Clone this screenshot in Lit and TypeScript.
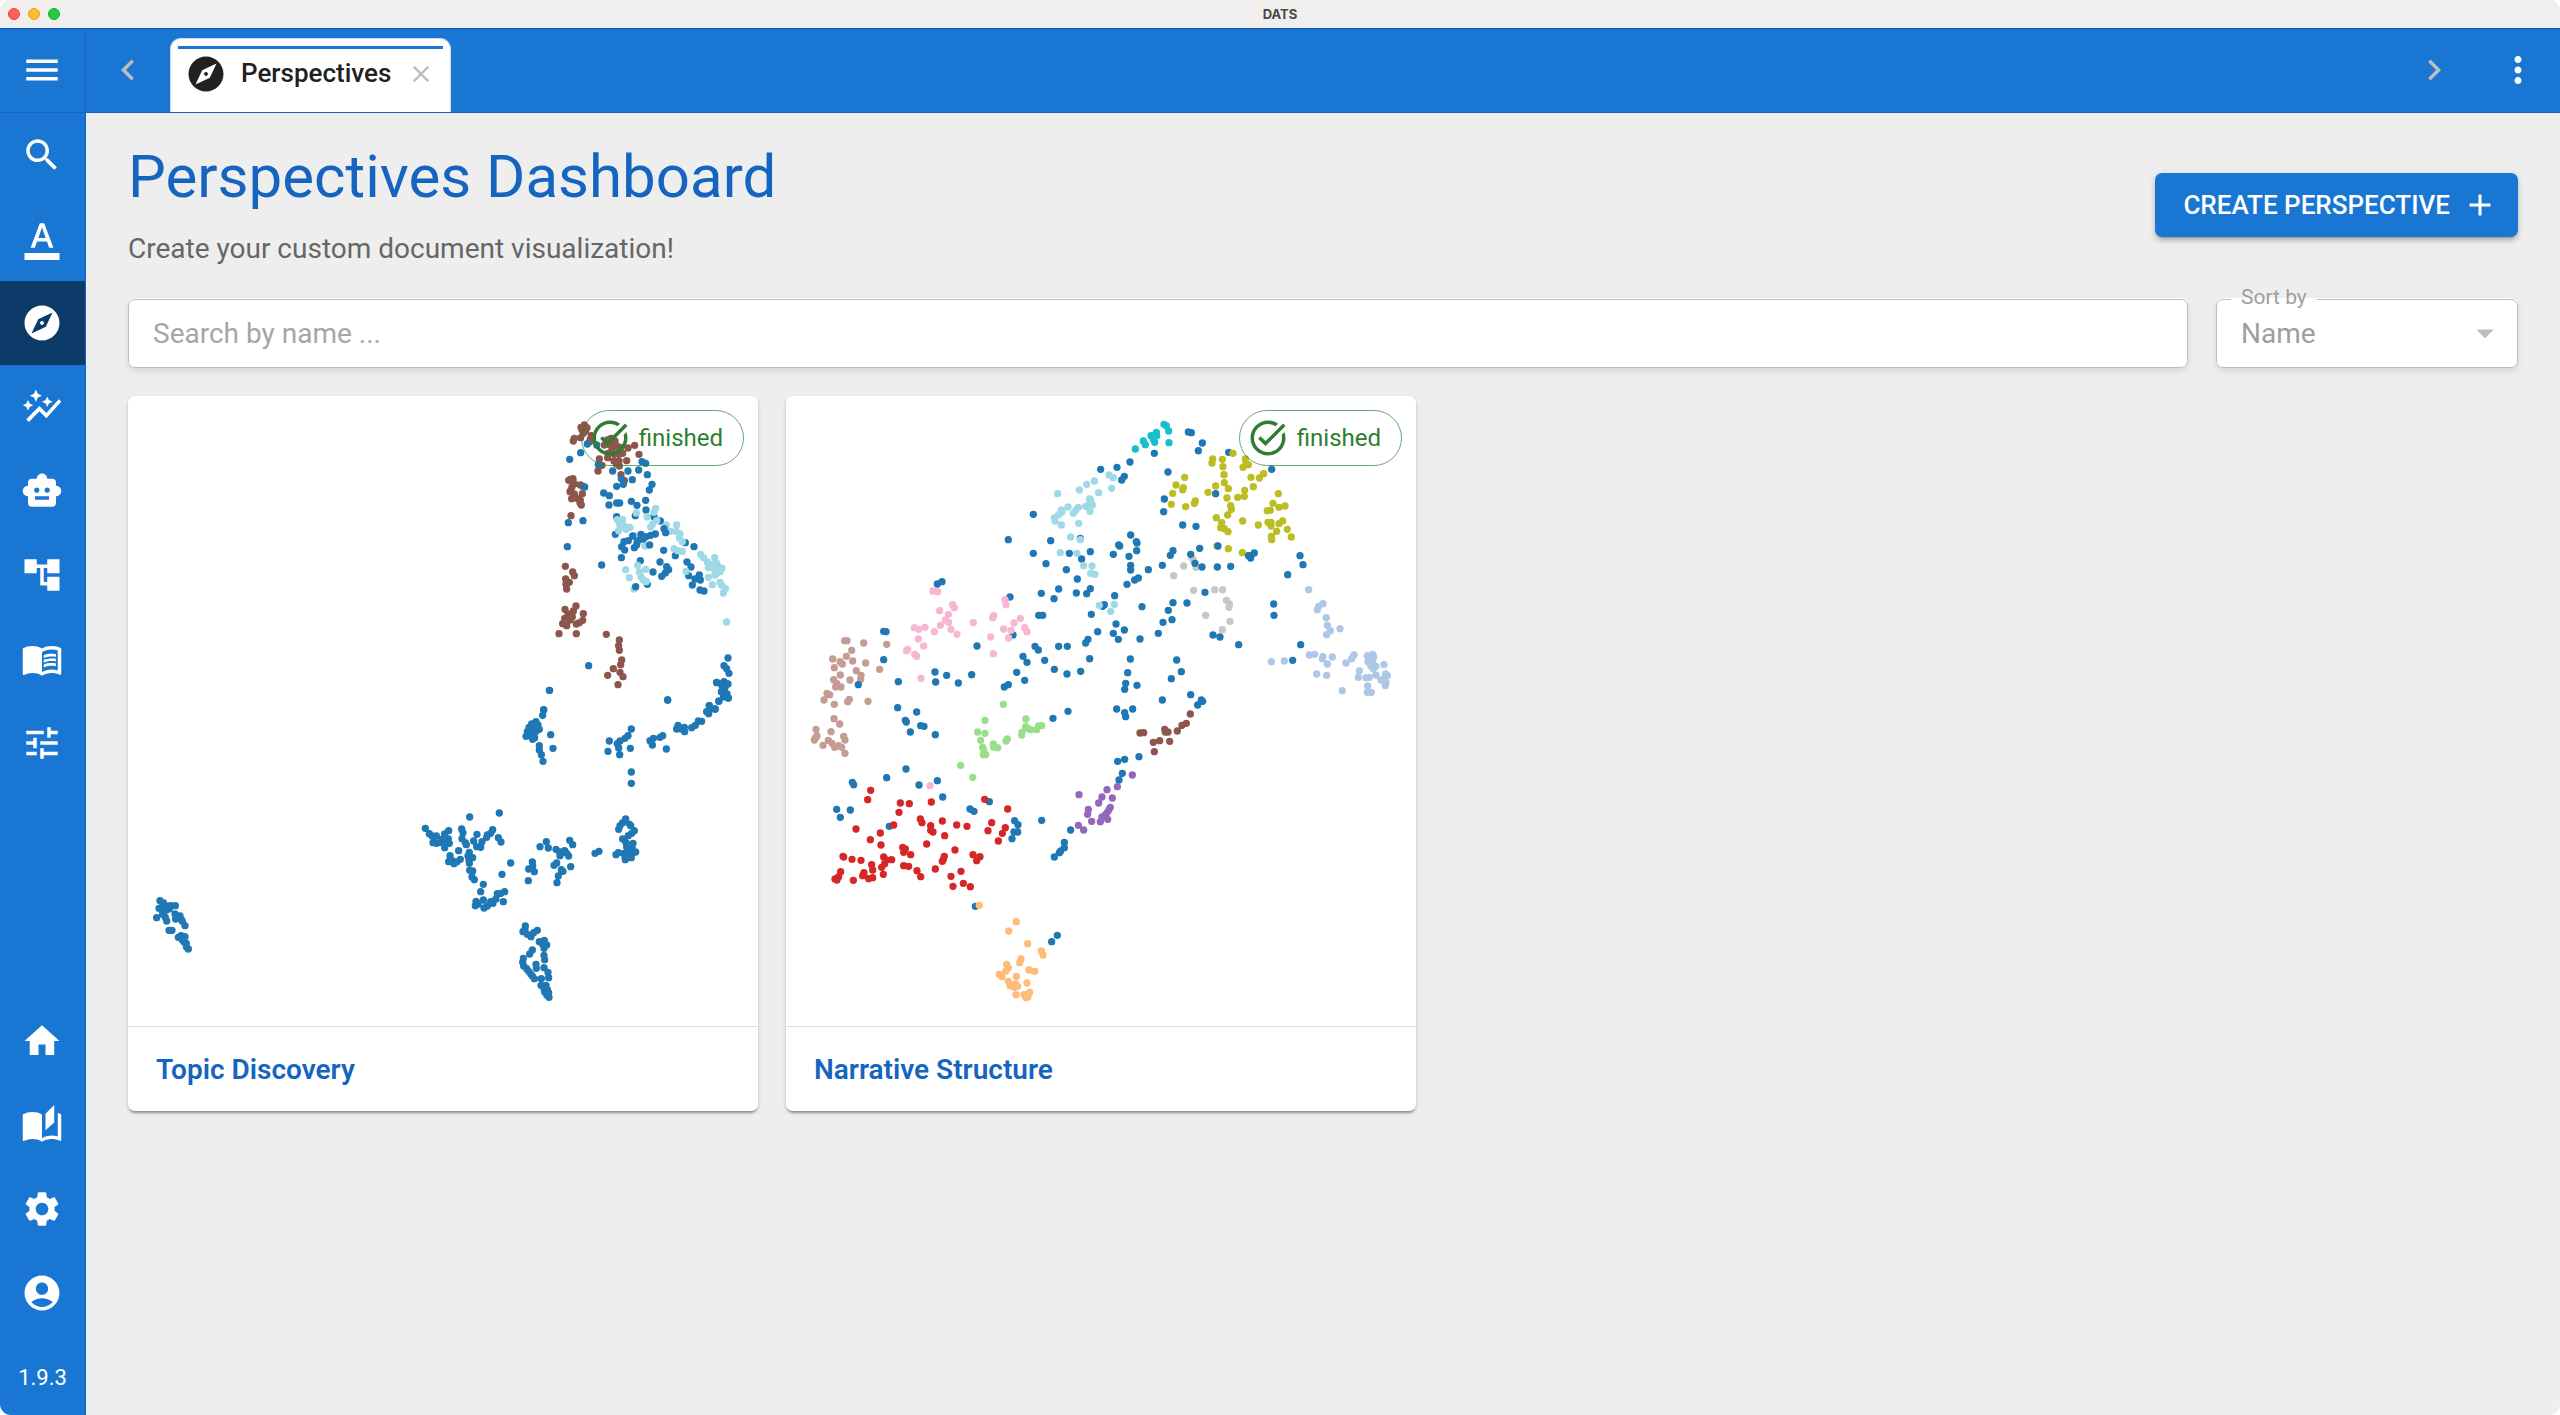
import { LitElement, html, css, svg } from "lit";
import { customElement, property, state } from "lit/decorators.js";
import { classMap } from "lit/directives/class-map.js";

const ICONS: Record<string, string> = {
  menu: "M3 18h18v-2H3v2zm0-5h18v-2H3v2zm0-7v2h18V6H3z",
  search:
    "M15.5 14h-.79l-.28-.27C15.41 12.59 16 11.11 16 9.5 16 5.91 13.09 3 9.5 3S3 5.91 3 9.5 5.91 16 9.5 16c1.61 0 3.09-.59 4.23-1.57l.27.28v.79l5 4.99L20.49 19l-4.99-5zm-6 0C7.01 14 5 11.99 5 9.5S7.01 5 9.5 5 14 7.01 14 9.5 11.99 14 9.5 14z",
  annotate:
    "M2 20h20v4H2v-4zm3.49-3h2.42l1.27-3.58h5.65L16.09 17h2.42L13.25 3h-2.5L5.49 17zm4.42-5.61 2.03-5.79h.12l2.03 5.79H9.91z",
  explore:
    "M12 10.9c-.61 0-1.1.49-1.1 1.1s.49 1.1 1.1 1.1c.61 0 1.1-.49 1.1-1.1s-.49-1.1-1.1-1.1zM12 2C6.48 2 2 6.48 2 12s4.48 10 10 10 10-4.48 10-10S17.52 2 12 2zm2.19 12.19L6 18l3.81-8.19L18 6l-3.81 8.19z",
  graph:
    "M14.06 9.94 12 9l2.06-.94L15 6l.94 2.06L18 9l-2.06.94L15 12l-.94-2.06zM4 14l.94-2.06L7 11l-2.06-.94L4 8l-.94 2.06L1 11l2.06.94L4 14zm4.5-5 1.09-2.41L12 5.5 9.59 4.41 8.5 2 7.41 4.41 5 5.5l2.41 1.09L8.5 9zm-4 11.5 6-6.01 4 4L23 8.93l-1.41-1.41-7.09 7.97-4-4L3 19l1.5 1.5z",
  robot:
    "M20 9V7c0-1.1-.9-2-2-2h-3c0-1.66-1.34-3-3-3S9 3.34 9 5H6c-1.1 0-2 .9-2 2v2c-1.66 0-3 1.34-3 3s1.34 3 3 3v4c0 1.1.9 2 2 2h12c1.1 0 2-.9 2-2v-4c1.66 0 3-1.34 3-3s-1.34-3-3-3zM7.5 11.5c0-.83.67-1.5 1.5-1.5s1.5.67 1.5 1.5S9.83 13 9 13s-1.5-.67-1.5-1.5zM16 17H8v-2h8v2zm-1-4c-.83 0-1.5-.67-1.5-1.5S14.17 10 15 10s1.5.67 1.5 1.5S15.83 13 15 13z",
  tree: "M22 11V3h-7v3H9V3H2v8h7V8h2v10h4v3h7v-8h-7v3h-2V8h2v3z",
  book: "M21 5c-1.11-.35-2.33-.5-3.5-.5-1.95 0-4.05.4-5.5 1.5-1.45-1.1-3.55-1.5-5.5-1.5S2.45 4.9 1 6v14.65c0 .25.25.5.5.5.1 0 .15-.05.25-.05C3.1 20.45 5.05 20 6.5 20c1.95 0 4.05.4 5.5 1.5 1.35-.85 3.8-1.5 5.5-1.5 1.65 0 3.35.3 4.75 1.05.1.05.15.05.25.05.25 0 .5-.25.5-.5V6c-.6-.45-1.25-.75-2-1zm0 13.5c-1.1-.35-2.3-.5-3.5-.5-1.7 0-4.15.65-5.5 1.5V8c1.35-.85 3.8-1.5 5.5-1.5 1.2 0 2.4.15 3.5.5v11.5zM17.5 10.5c.88 0 1.73.09 2.5.26V9.24c-.79-.15-1.64-.24-2.5-.24-1.7 0-3.24.29-4.5.83v1.66c1.13-.64 2.7-.99 4.5-.99zM13 12.49v1.66c1.13-.64 2.7-.99 4.5-.99.88 0 1.73.09 2.5.26V11.9c-.79-.15-1.64-.24-2.5-.24-1.7 0-3.24.3-4.5.83zM17.5 14.33c-1.7 0-3.24.29-4.5.83v1.66c1.13-.64 2.7-.99 4.5-.99.88 0 1.73.09 2.5.26v-1.52c-.79-.16-1.64-.24-2.5-.24z",
  tune: "M3 17v2h6v-2H3zM3 5v2h10V5H3zm10 16v-2h8v-2h-8v-2h-2v6h2zM7 9v2H3v2h4v2h2V9H7zm14 4v-2H11v2h10zm-6-4h2V7h4V5h-4V3h-2v6z",
  home: "M10 20v-6h4v6h5v-8h3L12 3 2 12h3v8z",
  stories:
    "M19 .5l-5 5V15l5-4.5V.5zM1 6v14.65c0 .25.25.5.5.5.1 0 .15-.05.25-.05C3.1 20.45 5.05 20 6.5 20c1.95 0 4.05.4 5.5 1.5V6c-1.45-1.1-3.55-1.5-5.5-1.5S2.45 4.9 1 6zm22 13.5V6c-.6-.45-1.25-.75-2-1v13.5c-1.1-.35-2.3-.5-3.5-.5-1.7 0-4.15.65-5.5 1.5v2c1.35-.85 3.8-1.5 5.5-1.5 1.65 0 3.35.3 4.75 1.05.1.05.15.05.25.05.25 0 .5-.25.5-.5v-1.1z",
  settings:
    "M19.14 12.94c.04-.3.06-.61.06-.94 0-.32-.02-.64-.07-.94l2.03-1.58c.18-.14.23-.41.12-.61l-1.92-3.32c-.12-.22-.37-.29-.59-.22l-2.39.96c-.5-.38-1.03-.7-1.62-.94l-.36-2.54c-.04-.24-.24-.41-.48-.41h-3.84c-.24 0-.43.17-.47.41l-.36 2.54c-.59.24-1.13.57-1.62.94l-2.39-.96c-.22-.08-.47 0-.59.22L2.74 8.87c-.12.21-.08.47.12.61l2.03 1.58c-.05.3-.09.63-.09.94s.02.64.07.94l-2.03 1.58c-.18.14-.23.41-.12.61l1.92 3.32c.12.22.37.29.59.22l2.39-.96c.5.38 1.03.7 1.62.94l.36 2.54c.05.24.24.41.48.41h3.84c.24 0 .44-.17.47-.41l.36-2.54c.59-.24 1.13-.56 1.62-.94l2.39.96c.22.08.47 0 .59-.22l1.92-3.32c.12-.22.07-.47-.12-.61l-2.01-1.58zM12 15.6c-1.98 0-3.6-1.62-3.6-3.6s1.62-3.6 3.6-3.6 3.6 1.62 3.6 3.6-1.62 3.6-3.6 3.6z",
  account:
    "M12 2C6.48 2 2 6.48 2 12s4.48 10 10 10 10-4.48 10-10S17.52 2 12 2zm0 4c1.93 0 3.5 1.57 3.5 3.5S13.93 13 12 13s-3.5-1.57-3.5-3.5S10.07 6 12 6zm0 14c-2.03 0-4.43-.82-6.14-2.88C7.55 15.8 9.68 15 12 15s4.45.8 6.14 2.12C16.43 19.18 14.03 20 12 20z",
  left: "M15.41 7.41 14 6l-6 6 6 6 1.41-1.41L10.83 12z",
  right: "M10 6 8.59 7.41 13.17 12l-4.58 4.59L10 18l6-6z",
  more: "M12 8c1.1 0 2-.9 2-2s-.9-2-2-2-2 .9-2 2 .9 2 2 2zm0 2c-1.1 0-2 .9-2 2s.9 2 2 2 2-.9 2-2-.9-2-2-2zm0 6c-1.1 0-2 .9-2 2s.9 2 2 2 2-.9 2-2-.9-2-2-2z",
  close:
    "M19 6.41 17.59 5 12 10.59 6.41 5 5 6.41 10.59 12 5 17.59 6.41 19 12 13.41 17.59 19 19 17.59 13.41 12z",
  add: "M19 13h-6v6h-2v-6H5v-2h6V5h2v6h6v2z",
  down: "m7 10 5 5 5-5z",
  done: "M22 5.18 10.59 16.6l-4.24-4.24 1.41-1.41 2.83 2.83 10-10L22 5.18zM19.79 10.22c.13.57.21 1.17.21 1.78 0 4.42-3.58 8-8 8s-8-3.58-8-8 3.58-8 8-8c1.58 0 3.04.46 4.28 1.25l1.44-1.44C16.1 2.67 14.13 2 12 2 6.48 2 2 6.48 2 12s4.48 10 10 10 10-4.48 10-10c0-1.19-.22-2.33-.6-3.39l-1.61 1.61z",
};

const BLUE = "#1f77b4";
const BROWN = "#8c564b";
const PALE_CYAN = "#9edae5";

/** A run of dots of one colour; points are relative to the origin. */
interface Cluster {
  color: string;
  origin: [number, number];
  points: string;
}

interface Perspective {
  name: string;
  status: string;
  clusters: Cluster[];
}

const PERSPECTIVES: Perspective[] = [
  {
    name: "Topic Discovery",
    status: "finished",
    clusters: [
      {
        color: BROWN,
        origin: [1176, -18],
        points:
          "193,105 183,112 201,113 186,120 197,122 190,130 182,143 163,145 160,153 214,137 211,147 209,155 273,145 262,150 285,153 253,165 270,165 290,168 302,172 324,174 344,166 357,193 300,183 276,180 264,190 283,192 297,192 263,203 308,190 238,207 282,213 297,213 320,212 298,228 289,222 246,226 234,243 303,254 313,272 151,268 159,266 146,271 163,281 156,291 181,285 187,288 150,305 153,300 163,312 187,311 155,326 170,325 181,331 184,345 180,338 153,377 136,529 158,546 163,557 137,567 148,577 138,583 140,597 168,648 135,658 160,663 190,671 144,672 157,680 134,685 150,690 188,691 128,701 140,707 169,702 178,698 117,731 169,731 259,733 298,750 296,767 298,781 305,810 302,824 280,836 300,847 263,856 309,860 294,884",
      },
      {
        color: BLUE,
        origin: [1176, -18],
        points:
          "202,162 230,165 182,188 149,208 235,224 194,291 366,215 377,220 278,243 324,243 356,240 382,254 304,266 337,269 290,289 310,283 396,283 388,300 251,309 268,317 267,345 290,339 299,339 334,334 351,346 377,331 378,360 290,380 346,377 402,380 421,393 145,398 189,392 286,433 142,470 245,525 496,458 522,470 466,497 304,503 361,512 420,516 501,516 513,531 399,546 440,530 446,539 436,549 425,559 382,583 506,557 538,555 525,567 541,570 517,585 540,600 552,603 206,827 88,901 71,959 443,930 624,804 612,827 620,836 627,850 590,877 612,875 620,882 606,887 614,893 604,905 617,912 612,920 625,924 597,933 568,947 585,957",
      },
      {
        color: PALE_CYAN,
        origin: [1176, -18],
        points:
          "407,355 402,367 349,369 381,381 292,389 308,389 299,402 313,408 330,412 318,418 296,422 410,392 398,402 392,411 439,405 470,405 452,424 468,424 480,432 478,444 487,455 375,468 344,438 462,476 473,482 487,484 542,493 551,503 584,503 562,516 573,524 590,520 565,533 582,536 606,535 595,530 590,550 600,545 585,555 565,562 577,584 600,577 605,586 616,596 610,609 498,544 317,539 328,563 353,526 377,538 358,546 363,560 370,570 379,575 342,597 620,696",
      },
      {
        color: BLUE,
        origin: [1176, -18],
        points:
          "338,438 363,433 406,432 392,436 378,440 325,452 312,455 352,455 360,448 370,447 305,470 314,480 343,473 350,464 389,465 432,416 437,428 431,481 347,590",
      },
      {
        color: BLUE,
        origin: [816, 852],
        points:
          "449,31 431,90 428,106 408,125 395,132 414,135 387,142 400,142 418,148 382,155 394,155 407,155 378,169 392,168 404,173 398,178 452,164 459,205 418,197 418,210 424,224 429,244 803,60 950,8 968,10 984,12 975,22 966,36 981,42 985,54 971,50 956,64 928,77 933,86 946,87 920,95 926,101 905,124 895,123 886,136 875,143 834,136 830,147 844,147 853,142 854,155 694,147 628,183 624,214 684,167 675,175 660,183 652,191 656,204 691,205 659,224 788,167 780,172 760,175 750,182 757,195 799,207 694,276 694,310",
      },
      {
        color: BLUE,
        origin: [816, 852],
        points:
          "298,399 209,411 76,445 88,461 96,468 109,468 146,452 134,462 99,488 110,490 128,477 145,477 122,487 138,490 134,503 148,490 185,447 189,458 186,476 196,488 199,494 221,483 231,463 278,449 272,460 262,465 260,472 246,485 230,500 242,502 295,473 303,486 176,512 150,527 208,517 204,528 218,533 207,540 208,550 181,538 171,545 156,541 146,545 162,551 209,571 218,573 216,591 223,599 332,549 306,583 250,613 242,635 228,664 226,677 234,672 250,660 252,684 262,678 272,665 279,670 288,657 292,641 303,640 314,635 310,665",
      },
      {
        color: BLUE,
        origin: [816, 852],
        points:
          "677,417 668,428 689,433 660,437 656,448 692,437 703,452 685,467 695,460 668,477 678,488 699,490 680,502 697,505 707,516 655,518 648,524 672,520 690,518 675,530 694,533 676,539 597,514 585,520 509,481 518,494 439,485 420,500 445,504 468,508 478,515 494,512 500,520 480,527 506,528 470,549 462,556 512,560 484,569 489,574 475,588 471,608 397,546 398,557 386,567 403,575 385,602",
      },
      {
        color: BLUE,
        origin: [816, 852],
        points:
          "376,738 375,749 369,755 382,763 393,770 401,758 412,751 418,785 433,781 427,791 440,795 432,805 397,810 389,822 370,835 368,847 371,858 432,826 434,839 408,853 409,865 380,866 386,874 392,882 397,888 403,896 432,863 444,877 446,893 424,896 423,916 438,916 432,926 442,928 434,936 446,938 440,945 447,952",
      },
      {
        color: BLUE,
        origin: [-24, 1392],
        points:
          "120,122 130,128 117,145 128,140 140,138 152,137 166,137 125,150 140,150 110,173 128,163 136,172 140,183 132,155 148,146 165,162 180,168 167,177 184,178 187,184 195,197 147,211 156,211 175,232 183,227 195,230 187,240 192,246 199,250 199,260 205,267",
      },
    ],
  },
  {
    name: "Narrative Structure",
    status: "finished",
    clusters: [
      {
        color: "#c7c7c7",
        origin: [912, 12],
        points:
          "306,474 310,480 318,502 281,498 251,527 311,571 374,569 398,569 409,601 418,612 417,622 347,646 420,664 397,689",
      },
      {
        color: "#bcbd22",
        origin: [912, 12],
        points: "381,438",
      },
      {
        color: BLUE,
        origin: [12, 12],
        points:
          "730,343 655,419 782,422 730,460 768,491 838,460 875,477 871,415 829,509 862,537 806,567 754,580 792,596 859,579 890,581 442,552 456,545 660,591 746,646 758,646 669,705 281,694 288,695 561,738 735,739 745,750 806,739 832,739 887,729 894,718 764,781 699,769 711,787 281,779 435,816 470,826 545,824 505,849 437,846 325,845 680,817 704,841 793,808 831,822 872,814 899,776 655,854 643,861 323,923 380,936 346,961 349,966 392,977 402,979 361,996 436,1004 834,934 789,955 348,1107 290,1133 187,1147 191,1154 387,1155 442,1142 458,1191",
      },
      {
        color: BLUE,
        origin: [912, 12],
        points:
          "295,96 304,98 337,129 325,152 193,160 120,186 81,202 32,208 103,229 95,240 234,216 416,157 377,281 545,208 223,297 221,335 278,375 318,379 122,405 139,425 141,429 86,435 89,438 140,452 70,463 117,469 1,455 249,452 241,466 329,445 384,438 302,463 493,459 476,467 482,474 122,496 122,510 175,509 217,496 315,490 336,501 382,501 422,499 145,534 134,540 111,553 1,566 74,587 43,614 38,619 156,620 249,608 291,609 345,577 235,631 246,659 219,667 4,643 78,672 103,690 70,700 85,718 23,695 150,717 205,700 369,705 390,711 446,734 551,612 552,646 630,467 639,494 593,524 632,734 608,781 121,777 113,818 107,850 104,868 141,856 260,780 274,815 244,836 217,900 302,884 334,900 338,904 323,915 80,927 128,927 104,938 107,950 83,1084 104,1078 147,1070 97,1120 87,1140",
      },
      {
        color: BLUE,
        origin: [12, 1092],
        points:
          "598,125 540,147 552,154 140,148 181,150 151,172 298,199 674,182 684,194 672,216 683,216 666,236 755,181 842,210 823,247 823,263 812,273 808,278 793,291 556,439 785,545 802,526",
      },
      {
        color: PALE_CYAN,
        origin: [12, 12],
        points:
          "890,253 868,270 803,281 899,297 899,307 834,321 814,330 865,322 887,319 816,336 806,344 850,340 858,330 900,334 793,354 795,363 814,375 866,370 842,411 871,419 811,458 861,460 881,497 957,225 970,233 913,243 926,278 965,265 902,300 907,315 906,498 902,520 915,523 928,616 973,613 962,634",
      },
      {
        color: "#17becf",
        origin: [912, 12],
        points:
          "222,73 229,77 236,93 199,97 183,107 193,106 200,107 160,123 166,134 190,118 194,127 237,128 136,147",
      },
      {
        color: "#f7b6d2",
        origin: [12, 12],
        points:
          "429,573 443,575 449,632 488,614 493,623 475,643 466,660 476,667 451,676 483,688 433,695 501,703 373,683 386,688 405,682 385,717 401,738 350,752 353,748 374,763 380,769 393,835 550,668 611,647 608,653 645,599 648,614 691,655 672,669 641,687 663,691 704,683 711,695 602,711 656,714 610,761 420,1157",
      },
      {
        color: "#c49c94",
        origin: [12, 12],
        points:
          "164,722 171,722 221,729 290,733 185,751 169,769 128,777 150,785 157,792 188,783 227,789 133,803 269,808 199,812 213,826 212,838 151,825 131,839 180,840 140,850 137,861 153,861 111,880 119,884 102,900 178,898 173,905 133,913 234,904 132,956 149,972 78,988 123,995 81,1008 73,1020 76,1014 161,1009 165,1020 115,1021 126,1030 99,1036 134,1042 146,1037 155,1042 165,1060",
      },
      {
        color: BLUE,
        origin: [12, 12],
        points: "205,854",
      },
      {
        color: "#98df8a",
        origin: [12, 12],
        points:
          "640,913 585,961 708,957 563,996 585,1000 572,1021 652,1017 648,1023 610,1032 611,1041 623,1043 578,1042 581,1050 587,1064 580,1064 707,980 714,985 696,997 695,1005 722,989 740,989 746,978 755,977 512,1096 548,1132",
      },
      {
        color: "#bcbd22",
        origin: [912, 12],
        points:
          "429,160 368,177 366,189 397,178 399,200 466,177 475,194 459,202 468,190 402,224 403,248 521,221 483,232 508,234 284,232 258,255 280,263 278,269 248,280 244,313 287,320 316,303 313,310 354,277 377,258 415,266 411,294 443,292 464,271 463,289 490,260 422,317 424,328 413,345 379,353 395,368 392,383 403,386 414,395 458,363 505,375 565,281 549,310 567,322 585,318 532,332 541,331 534,367 543,367 543,378 567,371 578,363 592,388 560,394 544,409 545,419 604,411 415,446 457,458",
      },
      {
        color: BLUE,
        origin: [912, 12],
        points: "476,467",
      },
      {
        color: BROWN,
        origin: [912, 12],
        points:
          "301,942 289,970 276,976 262,993 224,988 226,996 234,996 150,999 161,998 190,1027 209,1022 239,1024 193,1055",
      },
      {
        color: "#aec7e8",
        origin: [912, 12],
        points:
          "656,569 699,611 686,619 682,629 709,653 712,676 721,692 710,704 750,686 658,765 674,763 699,770 697,776 727,771 712,792 544,785 583,783 680,822 710,826 792,765 785,776 768,789 832,767 848,763 851,771 834,785 848,785 858,799 882,794 842,797 850,806 808,813 805,832 828,833 838,832 858,825 887,822 892,827 873,840 882,835 888,848 886,857 833,858 832,877 844,877 757,872",
      },
      {
        color: "#9467bd",
        origin: [12, 1092],
        points:
          "1027,45 982,80 951,89 867,104 936,111 967,114 926,129 961,142 957,149 895,148 893,163 952,157 947,163 936,171 953,178 931,185 905,184 865,196 881,210",
      },
      {
        color: "#d62728",
        origin: [12, 1092],
        points:
          "242,91 233,119 331,129 358,131 424,126 327,157 584,118 653,147 391,177 396,188 457,183 311,195 422,197 422,211 429,216 500,195 531,199 605,188 594,212 646,203 637,220 625,243 464,227 198,207 271,219 241,239 273,255 410,252 338,262 346,267 341,277 362,284 495,270 159,289 161,291 186,298 213,301 281,291 289,300 305,299 284,311 463,289 460,298 457,304 549,284 570,290 560,302 245,314 248,330 275,322 152,335 341,317 356,319 381,332 436,327 513,334 222,338 218,347 146,350 135,357 141,360 236,356 248,353 280,343 190,361 392,350 483,349 520,370 489,379 541,380",
      },
      {
        color: "#ffbb78",
        origin: [12, 1092],
        points:
          "568,436 679,485 656,513 713,551 754,573 759,585 693,597 689,608 650,613 655,623 648,633 717,630 734,634 628,643 636,650 679,649 655,664 660,677 677,672 683,679 673,682 711,669 678,704 719,697 702,704 714,710 708,713",
      },
    ],
  },
];

@customElement("dats-icon")
export class DatsIcon extends LitElement {
  @property() name = "";

  static styles = css`
    :host {
      display: block;
      flex: none;
      width: 42px;
      height: 42px;
    }
    .glyph {
      display: block;
      width: 100%;
      height: 100%;
      fill: currentColor;
    }
  `;

  render() {
    return html`<svg class="glyph" viewBox="0 0 24 24" aria-hidden="true">
      <path d=${ICONS[this.name] ?? ""}></path>
    </svg>`;
  }
}

@customElement("scatter-thumbnail")
export class ScatterThumbnail extends LitElement {
  @property({ attribute: false }) clusters: Cluster[] = [];

  static styles = css`
    :host {
      display: block;
      aspect-ratio: 1;
    }
    .plot {
      display: block;
      width: 100%;
      height: 100%;
    }
    .dots {
      fill: none;
      stroke-width: 22;
      stroke-linecap: round;
    }
  `;

  private dots(points: string) {
    return points
      .split(" ")
      .map((point) => `M${point}h0`)
      .join("");
  }

  render() {
    return html`<svg class="plot" viewBox="0 0 1890 1890" aria-hidden="true">
      ${this.clusters.map(
        (c) =>
          svg`<path class="dots" stroke=${c.color} transform="translate(${c.origin[0]} ${c.origin[1]})" d=${this.dots(c.points)}></path>`,
      )}
    </svg>`;
  }
}

@customElement("perspective-card")
export class PerspectiveCard extends LitElement {
  @property({ attribute: false }) perspective!: Perspective;

  static styles = css`
    :host {
      display: block;
    }
    .card {
      position: relative;
      display: block;
      color: #1565c0;
      text-decoration: none;
      background: #fff;
      border-radius: 7px;
      box-shadow:
        0 4px 2px -2px rgba(0, 0, 0, 0.2),
        0 2px 2px 0 rgba(0, 0, 0, 0.14),
        0 2px 5px 0 rgba(0, 0, 0, 0.12);
    }
    .chip {
      position: absolute;
      top: 14px;
      right: 14px;
      box-sizing: border-box;
      display: flex;
      align-items: center;
      gap: 8px;
      height: 56px;
      padding: 0 20px 0 7px;
      border: 1px solid rgba(46, 125, 50, 0.7);
      border-radius: 28px;
      color: #2e7d32;
      font-size: 24px;
      line-height: 28px;
    }
    .name {
      margin: 0;
      padding: 22px 28px 20px;
      border-top: 1px solid #e0e0e0;
      font-size: 28px;
      line-height: 42px;
      font-weight: 600;
    }
  `;

  render() {
    const p = this.perspective;
    return html`<a class="card" href="#perspective">
      <scatter-thumbnail .clusters=${p.clusters}></scatter-thumbnail>
      <span class="chip"><dats-icon name="done"></dats-icon>${p.status}</span>
      <h2 class="name">${p.name}</h2>
    </a>`;
  }
}

@customElement("app-root")
export class AppRoot extends LitElement {
  @state() private active = "explore";

  static styles = css`
    :host {
      display: flex;
      flex-direction: column;
      min-height: 100vh;
      overflow: hidden;
      border-radius: 11px;
      background: #eeeeee;
      color: #212121;
      font-family: Roboto, "Liberation Sans", sans-serif;
    }
    button,
    input,
    select {
      margin: 0;
      padding: 0;
      border: 0;
      background: none;
      color: inherit;
      font: inherit;
    }
    button {
      cursor: pointer;
    }

    .titlebar {
      display: grid;
      grid-template-columns: 1fr auto 1fr;
      align-items: center;
      height: 28px;
      padding: 0 8px;
      background: #f0efee;
      border-bottom: 1px solid #0d56b3;
    }
    .lights {
      display: flex;
      gap: 8px;
    }
    .light {
      box-sizing: border-box;
      width: 12px;
      height: 12px;
      border: 1px solid #e2463f;
      border-radius: 50%;
      background: #ff5f57;
    }
    .light.amber {
      border-color: #dfa023;
      background: #febc2e;
    }
    .light.green {
      border-color: #1dad2b;
      background: #28c840;
    }
    .title {
      font-family: Inter, Roboto, sans-serif;
      font-size: 13px;
      line-height: 16px;
      font-weight: 700;
      color: #484848;
    }

    .app {
      flex: 1;
      display: grid;
      grid-template-columns: 86px 1fr;
      grid-template-rows: 84px 1fr;
    }
    .corner,
    .rail {
      color: #fff;
      background: #1976d2;
      border-right: 1px solid #1565c0;
    }
    .corner {
      display: flex;
      border-bottom: 1px solid #1565c0;
    }
    .rail {
      display: flex;
      flex-direction: column;
    }
    .tool {
      display: flex;
      align-items: center;
      width: 100%;
      height: 84px;
      padding-left: 21px;
    }
    .corner .tool {
      height: 82px;
    }
    .tool.active {
      background: #0d3b69;
    }
    .bottom {
      margin-top: auto;
    }
    .version {
      height: 70px;
      padding-top: 10px;
      text-align: center;
      font-size: 22px;
      line-height: 66px;
    }

    .tabbar {
      display: flex;
      color: #bdbdbd;
      background: #1976d2;
      border-bottom: 1px solid #1565c0;
    }
    .step {
      display: flex;
      align-items: center;
      justify-content: center;
      width: 84px;
      height: 82px;
    }
    .step.more {
      color: #fff;
    }
    .tab {
      align-self: flex-end;
      padding: 7px 7px 0;
      border: 1px solid #d5dbe3;
      border-bottom: 0;
      border-radius: 11px 11px 0 0;
      background: #fff;
      color: #212121;
    }
    .tabline {
      height: 3px;
      background: #1976d2;
    }
    .tabrow {
      display: flex;
      align-items: center;
      height: 63px;
      padding: 0 8px 13px 7px;
      box-sizing: border-box;
    }
    .tabname {
      margin: 0 16px 2px 14px;
      font-size: 26px;
      line-height: 28px;
      font-weight: 500;
    }
    .tabclose {
      color: #bdbdbd;
    }
    .small {
      width: 28px;
      height: 28px;
    }
    .spacer {
      flex: 1;
    }

    .main {
      display: flex;
      flex-direction: column;
      gap: 28px;
      padding: 27px 42px;
    }
    .header {
      display: flex;
      align-items: center;
      justify-content: space-between;
    }
    .heading {
      margin: 0 0 14px;
      color: #1565c0;
      font-size: 60px;
      line-height: 74px;
      font-weight: 400;
    }
    .subtitle {
      margin: 0;
      color: #666;
      font-size: 28px;
      line-height: 42px;
    }
    .create {
      display: flex;
      align-items: center;
      gap: 12px;
      height: 64px;
      padding: 0 20px 0 28px;
      border-radius: 7px;
      background: #1976d2;
      color: #fff;
      font-size: 26px;
      font-weight: 500;
      text-transform: uppercase;
      box-shadow:
        0 5px 2px -4px rgba(0, 0, 0, 0.2),
        0 4px 4px 0 rgba(0, 0, 0, 0.14),
        0 2px 9px 0 rgba(0, 0, 0, 0.12);
    }
    .plus {
      width: 36px;
      height: 36px;
    }

    .filters {
      display: grid;
      grid-template-columns: 1fr 302px;
      gap: 28px;
    }
    .field {
      position: relative;
      padding-top: 1px;
      border-radius: 7px;
      background: #fff;
      color: #9e9e9e;
      box-shadow: 0 3px 6px rgba(0, 0, 0, 0.1);
    }
    .control {
      display: block;
      box-sizing: border-box;
      width: 100%;
      height: 69px;
      padding: 0 24px;
      border: 1px solid #bdbdbd;
      border-radius: 7px;
      font-size: 28px;
      appearance: none;
    }
    .control::placeholder {
      color: #a6a6a6;
      opacity: 1;
    }
    .floating {
      position: absolute;
      top: -13px;
      left: 15px;
      padding: 0 10px;
      font-size: 21px;
      line-height: 24px;
      background: linear-gradient(#eeeeee 13px, #fff 13px);
    }
    .arrow {
      position: absolute;
      top: 14px;
      right: 12px;
      color: #bdbdbd;
      pointer-events: none;
    }
    .cards {
      display: grid;
      grid-template-columns: repeat(auto-fill, minmax(600px, 630px));
      gap: 28px;
    }
  `;

  private tool(icon: string, label: string) {
    const on = this.active === icon;
    return html`<button
      class=${classMap({ tool: true, active: on })}
      aria-label=${label}
      @click=${() => (this.active = icon)}
    >
      <dats-icon name=${icon}></dats-icon>
    </button>`;
  }

  render() {
    return html`
      <div class="titlebar">
        <div class="lights">
          <span class="light"></span>
          <span class="light amber"></span>
          <span class="light green"></span>
        </div>
        <span class="title">DATS</span>
      </div>
      <div class="app">
        <div class="corner">
          <button class="tool" aria-label="Menu"><dats-icon name="menu"></dats-icon></button>
        </div>
        <div class="tabbar">
          <button class="step" aria-label="Previous tabs"><dats-icon name="left"></dats-icon></button>
          <div class="tab">
            <div class="tabline"></div>
            <div class="tabrow">
              <dats-icon name="explore"></dats-icon>
              <span class="tabname">Perspectives</span>
              <button class="tabclose" aria-label="Close tab">
                <dats-icon class="small" name="close"></dats-icon>
              </button>
            </div>
          </div>
          <div class="spacer"></div>
          <button class="step" aria-label="Next tabs"><dats-icon name="right"></dats-icon></button>
          <button class="step more" aria-label="More"><dats-icon name="more"></dats-icon></button>
        </div>
        <nav class="rail">
          ${this.tool("search", "Search")} ${this.tool("annotate", "Annotation")}
          ${this.tool("explore", "Perspectives")} ${this.tool("graph", "Analysis")}
          ${this.tool("robot", "Assistant")} ${this.tool("tree", "Codes")}
          ${this.tool("book", "Logbook")} ${this.tool("tune", "Tools")}
          <div class="bottom">
            ${this.tool("home", "Projects")} ${this.tool("stories", "Documentation")}
            ${this.tool("settings", "Settings")} ${this.tool("account", "Account")}
            <div class="version">1.9.3</div>
          </div>
        </nav>
        <main class="main">
          <header class="header">
            <div>
              <h1 class="heading">Perspectives Dashboard</h1>
              <p class="subtitle">Create your custom document visualization!</p>
            </div>
            <button class="create">Create Perspective<dats-icon class="plus" name="add"></dats-icon></button>
          </header>
          <div class="filters">
            <div class="field">
              <input class="control" type="text" aria-label="Search by name" placeholder="Search by name ..." />
            </div>
            <div class="field">
              <label class="floating" for="sort">Sort by</label>
              <select class="control" id="sort">
                <option>Name</option>
              </select>
              <dats-icon class="arrow" name="down"></dats-icon>
            </div>
          </div>
          <section class="cards">
            ${PERSPECTIVES.map((p) => html`<perspective-card .perspective=${p}></perspective-card>`)}
          </section>
        </main>
      </div>
    `;
  }
}
